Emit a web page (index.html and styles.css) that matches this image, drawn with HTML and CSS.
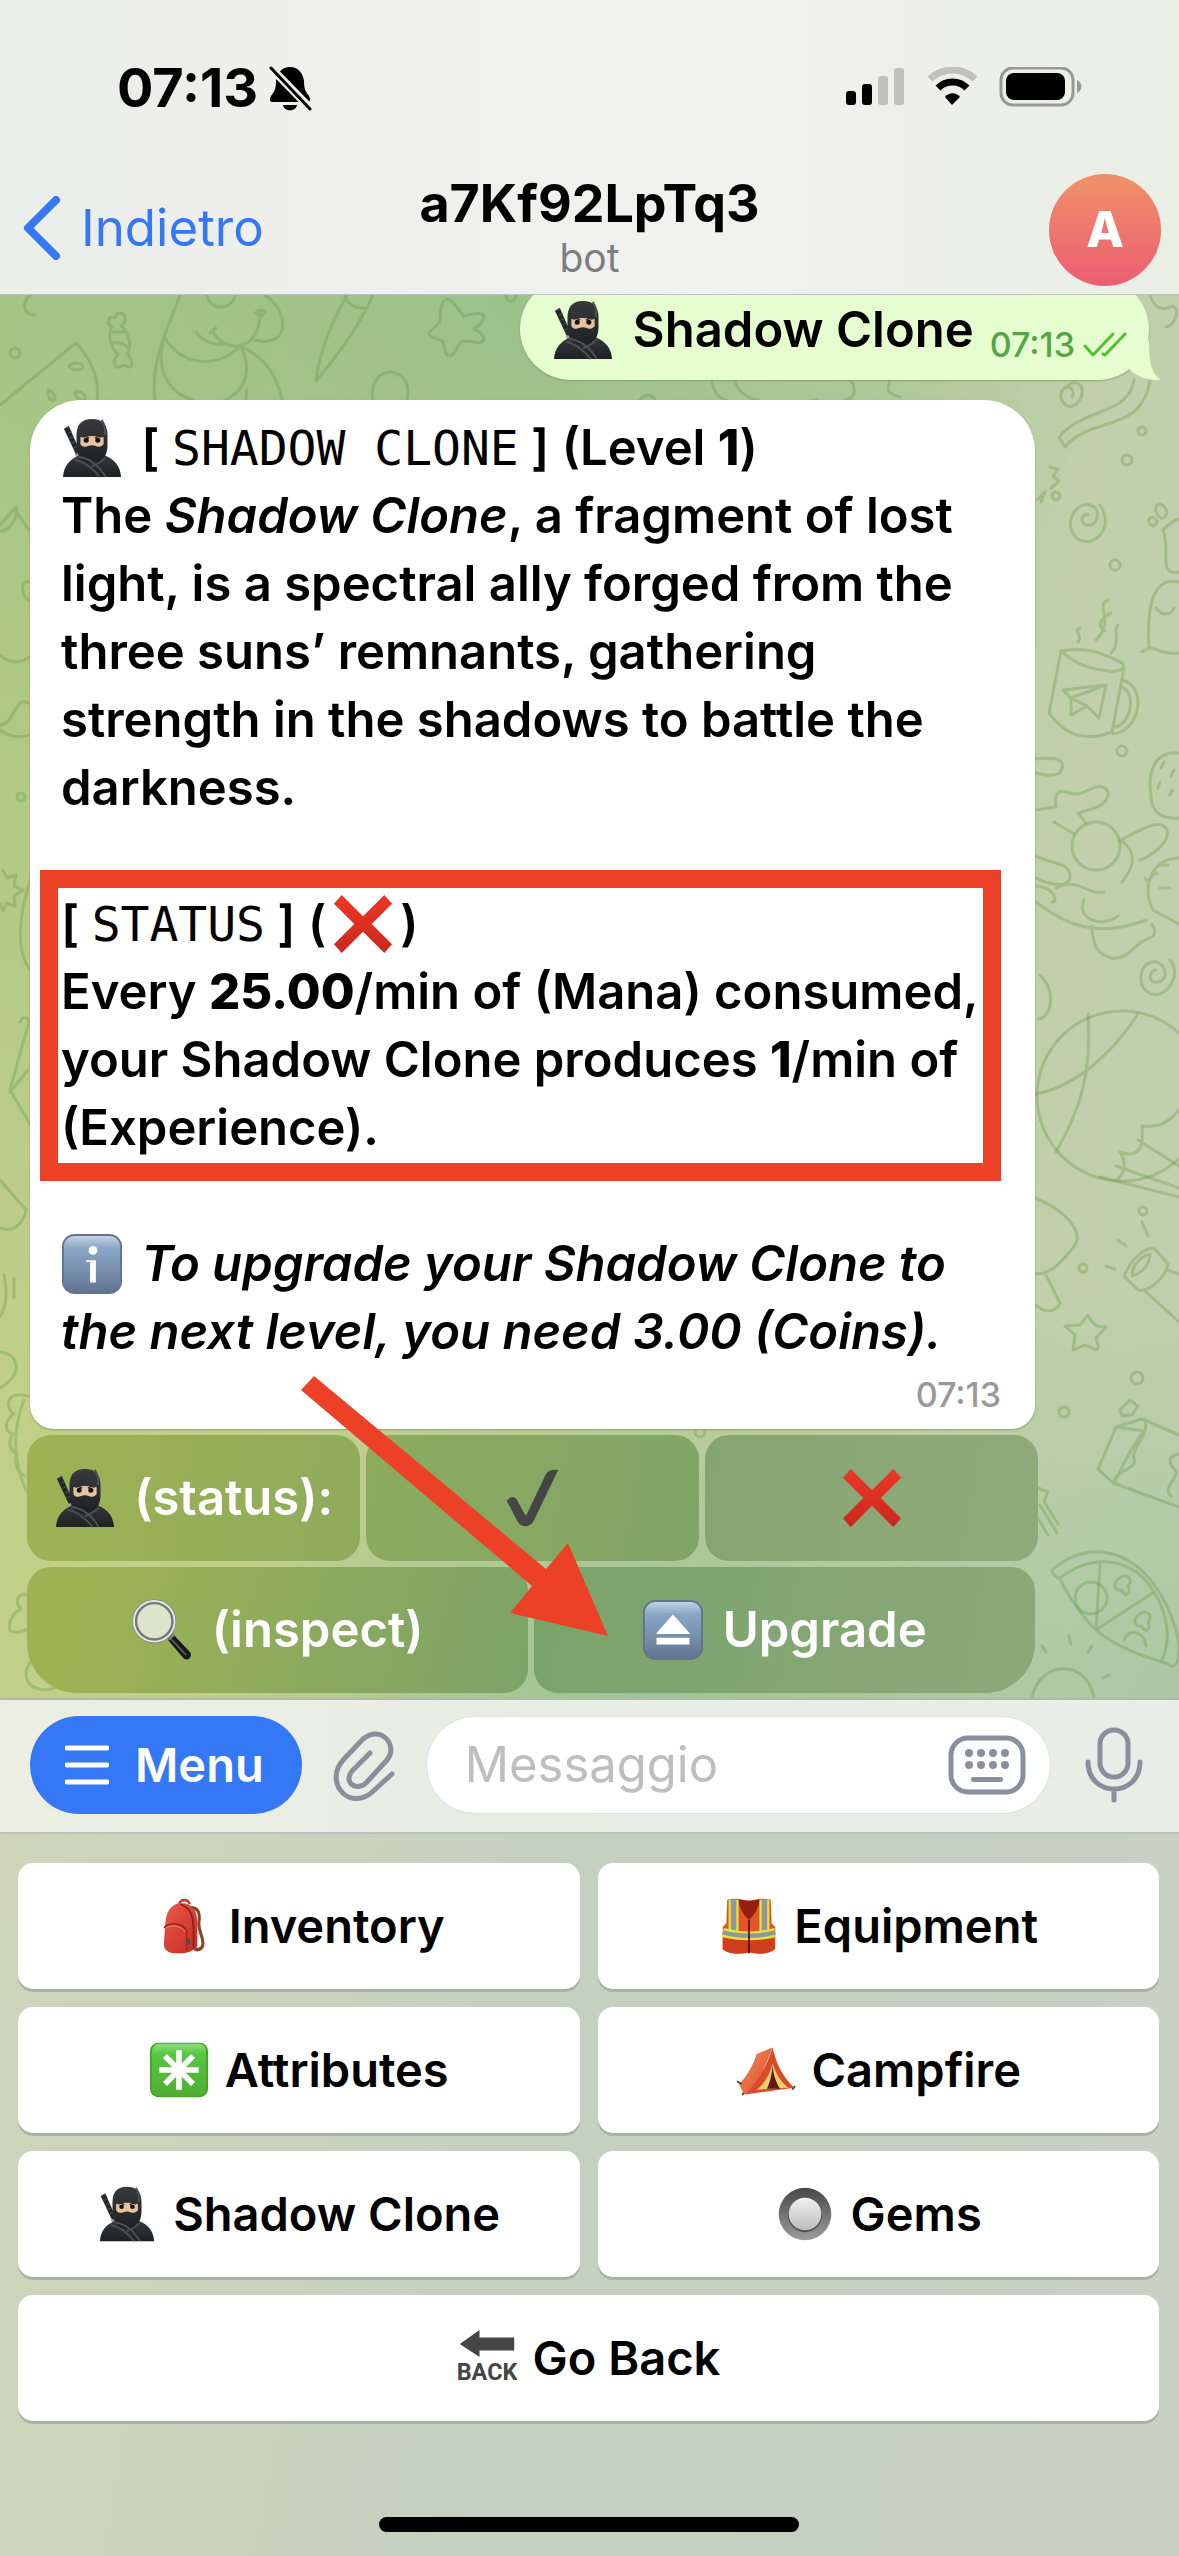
FILE: index.html
```html
<!DOCTYPE html>
<html lang="it">
<head>
<meta charset="utf-8">
<meta name="viewport" content="width=device-width, initial-scale=1">
<title>a7Kf92LpTq3</title>
<link rel="stylesheet" href="styles.css">
</head>
<body>
<svg class="sprite" width="0" height="0" aria-hidden="true">
  <defs>
    <linearGradient id="g-tile" x1="0" y1="0" x2="0" y2="1"><stop offset="0" stop-color="#c3d3e4"/><stop offset=".22" stop-color="#89a5c6"/><stop offset=".6" stop-color="#7890ae"/><stop offset="1" stop-color="#61738e"/></linearGradient>
    <linearGradient id="g-green" x1="0" y1="0" x2="0" y2="1"><stop offset="0" stop-color="#8fe07c"/><stop offset=".2" stop-color="#5ac543"/><stop offset="1" stop-color="#4eae32"/></linearGradient>
    <linearGradient id="g-red" x1="0" y1="0" x2="0" y2="1"><stop offset="0" stop-color="#ee3626"/><stop offset="1" stop-color="#c9291d"/></linearGradient>
    <linearGradient id="g-ring" x1="0" y1="0" x2="0" y2="1"><stop offset="0" stop-color="#484848"/><stop offset="1" stop-color="#9c9c9c"/></linearGradient>
    <linearGradient id="g-knob" x1="0" y1="0" x2="0" y2="1"><stop offset="0" stop-color="#f2f2f2"/><stop offset="1" stop-color="#bcbcbc"/></linearGradient>
    <linearGradient id="g-tent" x1="0" y1="0" x2="1" y2="1"><stop offset="0" stop-color="#f58a5c"/><stop offset="1" stop-color="#dc4f2c"/></linearGradient>
    <linearGradient id="g-pack" x1="0" y1="0" x2="1" y2="1"><stop offset="0" stop-color="#ee5a4a"/><stop offset="1" stop-color="#c22a22"/></linearGradient>
    <linearGradient id="g-robe" x1="0" y1="0" x2="0" y2="1"><stop offset="0" stop-color="#383a3f"/><stop offset="1" stop-color="#1f2023"/></linearGradient>

    <symbol id="ninja" viewBox="0 0 64 64">
      <path d="M3 12l5-3 13 30-4 3z" fill="#26272b"/>
      <path d="M5 12l3-2M7 17l4-2M9 22l4-2M11 27l4-2M13 32l4-2" stroke="#55575d" stroke-width="1"/>
      <path d="M14 38l7-1 1 5-5 2z" fill="#9a9ca1"/>
      <path d="M2 62c1-12 7-18 16-22l14-3 14 3c9 4 15 10 16 22z" fill="url(#g-robe)"/>
      <path d="M32 2c11 0 16 6 16 17v10c0 12-6 19-16 19s-16-7-16-19V19C16 8 21 2 32 2z" fill="url(#g-robe)"/>
      <path d="M20 21c8-2 16-2 24 0v7c-3 3-6 3-8 2-3-1-5-1-8 0-3 1-6 1-8-2z" fill="#e6c3a0"/>
      <circle cx="26" cy="24" r="2.600" fill="#17130f"/><circle cx="38" cy="24" r="2.600" fill="#17130f"/>
      <path d="M22 21c2-1 5-1 7 1M35 22c2-2 5-2 7-1" stroke="#3b2d22" stroke-width="1.500" fill="none"/>
      <path d="M14 44c10 2 20 10 26 18M18 41c12 2 22 10 28 21M46 42c-4 4-9 7-14 9M42 3c4 6 4 10 3 16" stroke="#4e5056" stroke-width="2" fill="none"/>
    </symbol>
    <symbol id="cross" viewBox="0 0 64 64"><path d="M10 2l22 22L54 2l8 9-21 21 21 21-8 9-22-22-22 22-8-9 21-21L2 11z" fill="url(#g-red)"/></symbol>
    <symbol id="info" viewBox="0 0 64 64">
      <rect x="1" y="1" width="62" height="62" rx="13" fill="#61748f"/><rect x="3" y="3" width="58" height="59" rx="11" fill="url(#g-tile)"/>
      <circle cx="33" cy="18" r="4.500" fill="#fff"/><path d="M26 28h10v23h-6V30h-4z" fill="#fff"/>
    </symbol>
    <symbol id="eject" viewBox="0 0 64 64">
      <rect x="1" y="1" width="62" height="62" rx="13" fill="#61748f"/><rect x="3" y="3" width="58" height="59" rx="11" fill="url(#g-tile)"/>
      <path d="M32 16l17 19v1H15v-1zM15 40h34v7H15z" fill="#fff"/>
    </symbol>
    <symbol id="asterisk" viewBox="0 0 64 60">
      <rect x="1" y="1" width="62" height="58" rx="9" fill="#46a02c"/><rect x="3" y="2" width="58" height="56" rx="8" fill="url(#g-green)"/>
      <path d="M32 9v42M11 30h42M17 15l30 30M47 15L17 45" stroke="#fff" stroke-width="6"/><circle cx="32" cy="30" r="6" fill="#fff"/>
    </symbol>
    <symbol id="check" viewBox="0 0 64 64"><path d="M5 35c4-6 9-5 11 0l7 13c1 2 2 2 3 0L45 8c2-4 6-6 13-5L33 55c-4 8-13 8-17 1z" fill="#454545"/></symbol>
    <symbol id="magnifier" viewBox="0 0 64 64">
      <path d="M38 42l6-5 17 18c3 5-3 10-7 6z" fill="#18181a"/><path d="M42 42l15 16" stroke="#5b5b5f" stroke-width="2"/>
      <path d="M35 37l6-4 4 5-5 5z" fill="#77797d"/>
      <circle cx="24" cy="23" r="20" fill="#dde4cb" stroke="#74787d" stroke-width="5"/><circle cx="24" cy="23" r="21" fill="none" stroke="#e3e6ea" stroke-width="2"/>
    </symbol>
    <symbol id="backpack" viewBox="0 0 64 64">
      <g transform="translate(5 0) scale(.84 1)">
      <path d="M40 12c12-1 15 5 13 16-1 10 7 17 5 26-2 4-7 5-11 3" fill="none" stroke="#8a4326" stroke-width="4"/>
      <path d="M27 8c2-6 12-6 14 0" fill="none" stroke="#d6372c" stroke-width="3"/>
      <path d="M9 28C11 12 20 6 34 7c12 2 17 10 17 22v25c-5 6-16 9-27 8C12 62 7 58 7 52z" fill="url(#g-pack)"/>
      <path d="M29 8c14 4 17 14 17 30v18" fill="none" stroke="#84201a" stroke-width="2"/>
      <path d="M7 34c8-7 26-5 30 4v21" fill="none" stroke="#9b2720" stroke-width="2"/><path d="M40 46l-1 7" stroke="#40515e" stroke-width="3"/>
      <path d="M8 35c8-5 22-4 27 4" fill="none" stroke="#ff897a" stroke-width="1"/>
      </g>
    </symbol>
    <symbol id="vest" viewBox="0 0 64 64">
      <path d="M8 3c8-2 14-1 18 0 4 2 8 2 12 0 4-1 10-2 18 0l1 26 4 4v24c-8 7-20 6-28 4-9 2-22 3-30-4V33l4-4z" fill="#e35429"/>
      <path d="M20 3c8 1 16 1 24 0-2 10-6 17-12 22C26 20 22 13 20 3z" fill="#92200f"/>
      <path d="M3 46v12c8 6 21 5 29 3 8 2 20 3 28-3V46z" fill="#cf3d1d"/>
      <path d="M15 3v37M49 3v37" stroke="#dfe63f" stroke-width="11"/><path d="M15 3v37M49 3v37" stroke="#92979b" stroke-width="6"/>
      <path d="M3 39c18 5 40 5 58 0" fill="none" stroke="#dfe63f" stroke-width="10"/><path d="M3 39c18 5 40 5 58 0" fill="none" stroke="#92979b" stroke-width="5"/>
      <path d="M32 25v37" stroke="#57170c" stroke-width="2"/>
    </symbol>
    <symbol id="tent" viewBox="0 0 64 54">
      <path d="M22 10L39 3 20 50l-11 3-6-11C12 34 18 22 22 10z" fill="url(#g-tent)"/>
      <path d="M39 3c4 18 11 31 23 43l-52 7C24 40 33 22 39 3z" fill="#d94b29"/>
      <path d="M39 20c-3 12-9 22-17 28l34-2c-8-6-13-14-17-26z" fill="#ecd06f"/>
      <path d="M39 22c-1 11-3 19-6 25h14c-4-6-7-14-8-25z" fill="#611910"/>
      <path d="M1 39l5 3M8 51l-1 3M60 48l3-4" stroke="#644030" stroke-width="2"/>
    </symbol>
    <symbol id="gem" viewBox="0 0 64 64"><circle cx="32" cy="32" r="29" fill="url(#g-ring)"/><circle cx="32" cy="33" r="19" fill="#505050"/><circle cx="32" cy="32" r="18" fill="url(#g-knob)"/></symbol>
    <symbol id="back" viewBox="0 0 64 60">
      <path d="M3 15L24 0v8h37v14H24v7z" fill="#454545"/>
      <text x="32" y="53" text-anchor="middle" font-family="Roboto, sans-serif" font-weight="700" font-size="25" fill="#454545">BACK</text>
    </symbol>
  </defs>
</svg>

<header class="top">
  <div class="status">
    <div class="clock">07:13
      <svg viewBox="0 0 44 46" width="44" height="46" aria-hidden="true"><path d="M22 2c8 0 13 6 14 14 0 9 2 11 5 15 2 4 1 6-2 6H5c-3 0-4-2-2-6 3-4 5-6 5-15C9 8 14 2 22 2z"/><path d="M15 40h14c-1 7-13 7-14 0z"/><path d="M3 3l39 40" stroke="#efefed" stroke-width="8"/><path d="M3 3l39 41" stroke="#000" stroke-width="3" stroke-linecap="round"/></svg>
    </div>
    <svg class="radios" viewBox="0 0 236 42" width="236" height="42" aria-hidden="true">
      <rect x="0" y="24" width="10" height="14" rx="3"/><rect x="16" y="17" width="10" height="21" rx="3"/><g fill="#c0c0bf"><rect x="32" y="9" width="10" height="29" rx="3"/><rect x="48" y="1" width="10" height="37" rx="3"/></g>
      <path d="M84 12c13-12 32-12 45 0" fill="none" stroke="#c0c0bf" stroke-width="7"/><path d="M92 21c8-8 21-8 29 0" fill="none" stroke="#000" stroke-width="7"/><path d="M106 38l-7-8c4-5 11-5 15 0z"/>
      <rect x="155" y="1" width="72" height="37" rx="12" fill="none" stroke="#999a97" stroke-width="3"/><rect x="160" y="6" width="59" height="27" rx="8"/><path d="M231 13c6 3 6 10 0 13z" fill="#999a97"/>
    </svg>
  </div>
  <nav class="navbar">
    <a class="backlink" href="#"><svg viewBox="0 0 38 64" width="38" height="64" aria-hidden="true"><path d="M33 4L5 32l28 28" fill="none" stroke="#3478f6" stroke-width="8" stroke-linecap="round" stroke-linejoin="round"/></svg>Indietro</a>
    <div class="peer"><h1>a7Kf92LpTq3</h1><p>bot</p></div>
    <a class="avatar" href="#">A</a>
  </nav>
</header>

<main class="chat">
  <svg class="doodles" viewBox="0 295 1179 1403" preserveAspectRatio="xMidYMin slice" aria-hidden="true">
    <g>
      <path d="M30 295c-9 9-7 20 5 20M0 405l76-62c20 22 23 40 21 57M69 366c5-5 14-3 14 1s-12 4-14-1zM48 390c5 1 9 8 6 10s-7-4-6-10zM75 392c6-2 12 3 10 7s-9 0-10-7z"/>
      <path d="M112 327c-8-6-1-12 3-9 2-8 10-5 10 0 0 5-2 7-4 8 9 8 11 21 6 28 6 6 7 14 1 13-3-3-6-1-9 0-6 2-6-7-1-13-8-6-10-21-6-27zM111 332h15M111 343c6-1 12 0 17 4"/>
      <path d="M180 295l-16 42c-10 26-11 46-9 63M164 337c20 32 56 30 76 9M163 343c-8 34 12 52 30 57M225 400c26-12 25-38 15-54 24 10 37 30 42 54M207 295c2 16 26 16 28 0M265 295c26 18 24 54-11 45M212 331c14 24 48 20 48-18M196 332q10 14 32 12M255 313q6-5 10-1l-4 5zM247 390l-1 10M210 333l6-5"/>
      <path d="M347 295c-17 30-28 60-31 86 22-26 44-56 57-86M345 298q6 11 20 10M373 400c-6-38 42-36 34 0"/>
      <path d="M443 302c6-8 12 4 21 14 10-3 20-4 20 1s-7 9-10 12c6 3 12 8 9 12s-12-1-21 0c-5 5-8 16-13 15s-4-8-6-15c-6-3-14-3-14-7s7-6 11-12c0-6 0-14 3-20z"/>
      <path d="M640 400c4-6 12-6 15 0M712 381c2 12 6 17 16 20M735 381c4 18 30 28 82 19M845 400c10-2 12-10 6-19M890 381c-6 12 4 14 10 16"/>
      <path d="M1034 295c-4 8 4 14 14 12M1150 295c4 12 10 16 20 12s8 18-4 20M1066 388c8-12 23-2 13 13-9 13-22 0-17-10 5-9 14-2 10 6"/>
      <path d="M1134 380c-6 36-50 27-75 57l6 10c26-32 76-12 85-67M1050 467l8 2-5 7 6 5-8 7M1037 500l8-8-4 10"/>
      <path d="M1100 505c16 24-8 44-22 34-16-12-4-38 12-34 14 4 6 24-4 20-8-4-2-13 2-10"/>
      <path d="M1163 530c14-14 16-10 16-10M1179 572c-22 4-8-22-16-42M1157 505c6-4 13 7 8 12s-12-6-8-12zM1150 518c5-2 9 4 5 7s-9-5-5-7z"/>
      <path d="M1105 631c-10-6-2-14 6-18M1108 600c-14 6 8 20-12 40M1118 625c-6 6 4 16-7 28M1080 628c-8 2 4 8-2 14"/>
      <path d="M1061 651q30-6 61 12c6 8-8 10-20 7q-24-3-41-19zM1061 651l-12 62q24 34 63 19l12-64M1122 680c26 6 18 52-9 54M1121 687c16 4 10 38-6 40M1063 690l43-5-7 33-12-12-16 9v-17zM1106 685l-35 13 16 8-16 9"/>
      <path d="M1179 582c-22-5-33 15-30 66l-7 4M1149 648c8 0 18 8 30 5M1156 608c6 8 14 8 18 0M1179 753c-22-3-32 16-28 42 0 20 14 24 28 23M1164 762l-3 6M1174 770l-3 6M1160 782l-2 6M1172 790l-2 5"/>
      <path d="M1036 759c20-2 32 0 24 14-8 4-16 2-24 0M1036 810l20-3c-2-16 4-18 14-14s18-4 26-6 16 4 10 13-20 10-28 13l8 10M1054 822l20 12"/>
      <circle cx="1096" cy="846" r="24"/>
      <path d="M1121 840c16-8 40-24 46-10 4 14-20 28-28 30M1036 856c14 8 34 6 34 20s-22 8-34 2M1036 886c20 2 22 16 16 16M1120 840c20 12 12 30 2 42M1179 858c-28 0-38 30-26 52l26 14M1036 902c30 24 64 36 110 18M1056 888c20-12 32 8 48 4M1084 900c-8 20 18 28 34 16M1092 926c0 20 8 30 20 32 18 2 22-16 38-20 8-4 4-10 2-14M1145 878c6 8 8-10 12-4M1160 865h8M1160 888h10M1040 975c18 18 10 44-2 44"/>
      <path d="M1170 960c12 14-2 38-18 34s-14-30 0-32 18 18 6 20-8-12-2-12"/>
      <circle cx="1122" cy="1096" r="85"/><path d="M1036 1094c40-8 76-40 102-80M1088 1014c4 60-8 96-32 138M1116 1180c10-6 10-20 4-28 18 6 24-2 22-26 14 2 26-2 37-16M1116 1166l63 22M1138 1140l41 26M1100 1177l79 20"/>
      <path d="M1035 1198c34 14 50 36 38 50-10 12-26 32-42 24M1046 1275l14 28c-4 10-16 10-24 2"/>
      <path d="M1124 1276c8-18 20-28 30-28l14 16c-4 16-20 28-30 26zM1132 1276c0-12 10-20 18-22 0 12-10 20-18 22zM1168 1270l11 4M1144 1290l35 32M1142 1222l6 14M1118 1240l8 6M1106 1266l9 3"/>
      <path d="M1088 1315q5 13 18 12l-10 11q5 14-2 11l-9-4-12 5 2-15-10-9 15-1z"/>
      <path d="M1098 1469l18-42 26-8 37 16M1098 1469l15 14 66 24M1116 1427l28 4c-16 20-20 34-30 52M1144 1419c8 14-14 30-10 40s-20 12-20 24M1120 1410l10-10 8 6-6 9-10 1zM1179 1454c-12 2-10 10-4 16s-14 18-4 26"/>
      <path d="M1038 1488l10 4-4 10 14 22M1040 1505l17 28M1036 1515l12 20"/>
      <path d="M1052 1570c40-36 100-20 124 60 6 24 2 42-8 34-26-8-54-18-72-34-14-14-30-36-36-52-4 0-8-4-8-8zM1060 1578c34-26 74-20 94 14 16 26 16 50 8 68M1100 1564l-4 66 58-38"/>
      <circle cx="1091" cy="1598" r="16"/><path d="M1120 1578c6-6 14 2 8 8 4 8-4 12-6 4-8 2-10-8-2-12zM1140 1614c6-6 14 2 8 8 4 8-4 12-6 4-8 2-10-8-2-12zM1124 1640c4-12 20-10 22 6"/>
      <path d="M1032 1698c6-36 54-42 62 0M1069 1636l2 8M1092 1646l-4 6M1042 1646l4 6M1103 1678l6-3"/>
      <path d="M14 509l16 22M0 525l16-18c2 14-8 24-16 24M30 582c-10-4-10 16 0 18M0 655c12 10 20 8 30 2M0 725c14-1 16-30 28-22M0 730q14 10 29 5"/>
      <path d="M3 870l4 8 9-3-2 11 9 4-9 6 1 10-8-3-4 8-3-8M30 880c-12 40-14 70 0 90M28 1025L10 1090l20 34M10 1092l18-22M20 1022c2-6 8-6 9 0M0 1180l26 30c-4 18-16 22-26 18M4 1275c4 18 2 32-4 42M14 1278v20M0 1352c20 2 20 22 8 30-4 4-8 6-8 6"/>
      <path d="M28 1396c-24-6-22 14-14 18-10 6-10 18-1 20-6 8-2 18 4 20-4 8 0 18 8 22M24 1400c-12 30-12 70 8 100M30 1595c-16-4-14 10-9 14-10 4-14 18-10 22 8 4 18-2 24-6M32 1660c-10 12-8 28 12 30 10 0 14-4 14-10"/>
    </g>
    <g><circle cx="15" cy="353" r="5"/><circle cx="511" cy="296" r="5"/><circle cx="21" cy="797" r="4"/><circle cx="1142" cy="431" r="4"/><circle cx="1127" cy="460" r="5"/><circle cx="1056" cy="496" r="4"/><circle cx="1115" cy="565" r="5"/><circle cx="1122" cy="751" r="5"/><circle cx="1143" cy="1211" r="4"/><circle cx="1083" cy="1268" r="4"/><circle cx="1137" cy="1378" r="6"/><circle cx="1064" cy="1412" r="5"/><circle cx="700" cy="1432" r="5"/></g>
  </svg>

  <div class="bubble bubble-out">
    <p><svg class="emoji"><use href="#ninja"/></svg> Shadow Clone</p>
    <span class="meta">07:13 <svg viewBox="0 0 44 26" width="44" height="26" aria-hidden="true"><path d="M2 14l8 9L30 2M20 22l2 1L42 2" fill="none" stroke="#4fc02f" stroke-width="3" stroke-linecap="round" stroke-linejoin="round"/></svg></span>
    <svg class="tail" viewBox="0 0 36 40" width="36" height="40" aria-hidden="true"><path d="M24 0c0 22 2 33 12 40-12 1-22-3-30-9L0 20z" fill="#e6fecf"/></svg>
  </div>

  <div class="thread">
    <article class="bubble bubble-in">
      <p><svg class="emoji"><use href="#ninja"/></svg> [ <code>SHADOW CLONE</code> ] (Level <b>1</b>)<br>The <i>Shadow Clone</i>, a fragment of lost light, is a spectral ally forged from the three suns’ remnants, gathering strength in the shadows to battle the darkness.</p>
      <p class="marked">[ <code>STATUS</code> ] (<svg class="emoji inline"><use href="#cross"/></svg>)<br>Every <b>25.00</b>/min of (Mana) consumed, your Shadow Clone produces <b>1</b>/min of (Experience).</p>
      <p><svg class="emoji"><use href="#info"/></svg> <i>To upgrade your Shadow Clone to the next level, you need 3.00 (Coins).</i></p>
      <time class="stamp">07:13</time>
    </article>

    <div class="keys">
      <div class="keyrow">
        <button class="key k1"><svg class="emoji"><use href="#ninja"/></svg> (status):</button>
        <button class="key k2" aria-label="on"><svg class="emoji tight"><use href="#check"/></svg></button>
        <button class="key k3" aria-label="off"><svg class="emoji tight"><use href="#cross"/></svg></button>
      </div>
      <div class="keyrow">
        <button class="key k4"><svg class="emoji"><use href="#magnifier"/></svg> (inspect)</button>
        <button class="key k5"><svg class="emoji"><use href="#eject"/></svg> Upgrade</button>
      </div>
      <svg class="arrow" viewBox="0 0 310 264" width="310" height="264" aria-hidden="true"><path d="M13 1L245 194l22-26 40 93-98-23 22-27L0 15z" fill="#ec4126"/></svg>
    </div>
  </div>
</main>

<form class="composer">
  <button type="button" class="menu"><svg viewBox="0 0 44 42" width="44" height="42" aria-hidden="true"><path d="M2 4h40M2 21h40M2 38h40" stroke="#fff" stroke-width="5" stroke-linecap="round"/></svg>Menu</button>
  <button type="button" class="tool" aria-label="Allega"><svg viewBox="0 0 64 74" width="64" height="74" fill="none" stroke="#8a8f9c" stroke-width="5" stroke-linecap="round" stroke-linejoin="round" aria-hidden="true"><path d="M38 25L20 43c-9 11 4 21 14 12l21-23c12-14-6-36-24-21L12 31C-8 52 14 82 38 66l22-20"/></svg></button>
  <div class="field">
    <input type="text" placeholder="Messaggio" aria-label="Messaggio">
    <button type="button" class="tool" aria-label="Tastiera"><svg viewBox="0 0 78 60" width="78" height="60" aria-hidden="true"><rect x="3" y="3" width="72" height="54" rx="17" fill="none" stroke="#8a8f9c" stroke-width="5"/><g fill="#8a8f9c"><circle cx="21" cy="18" r="4"/><circle cx="33" cy="18" r="4"/><circle cx="45" cy="18" r="4"/><circle cx="57" cy="18" r="4"/><circle cx="21" cy="30" r="4"/><circle cx="33" cy="30" r="4"/><circle cx="45" cy="30" r="4"/><circle cx="57" cy="30" r="4"/><rect x="23" y="42" width="32" height="5" rx="2"/></g></svg></button>
  </div>
  <button type="button" class="tool mic" aria-label="Messaggio vocale"><svg viewBox="0 0 58 76" width="58" height="76" fill="none" stroke="#8a8f9c" stroke-width="5" stroke-linecap="round" aria-hidden="true"><rect x="15" y="3" width="28" height="47" rx="14"/><path d="M3 35c0 36 52 36 52 0M29 62v11"/></svg></button>
</form>

<section class="panel">
  <div class="grid">
    <button><svg class="emoji"><use href="#backpack"/></svg> Inventory</button>
    <button><svg class="emoji"><use href="#vest"/></svg> Equipment</button>
    <button><svg class="emoji"><use href="#asterisk"/></svg> Attributes</button>
    <button><svg class="emoji"><use href="#tent"/></svg> Campfire</button>
    <button><svg class="emoji"><use href="#ninja"/></svg> Shadow Clone</button>
    <button><svg class="emoji"><use href="#gem"/></svg> Gems</button>
    <button class="wide"><svg class="emoji"><use href="#back"/></svg> Go Back</button>
  </div>
  <div class="home"></div>
</section>
</body>
</html>
```
FILE: styles.css
```css
* { box-sizing: border-box; }

body {
  margin: 0;
  min-height: 100vh;
  display: flex;
  flex-direction: column;
  font-family: Inter, "Liberation Sans", sans-serif;
  font-size: 49px;
  font-weight: 600;
  line-height: 68px;
  color: #000;
}

h1, p { margin: 0; }
button, input { font: inherit; color: inherit; border: 0; padding: 0; background: none; }
a { color: inherit; text-decoration: none; }
.sprite { position: absolute; }

.emoji {
  width: 62px;
  height: 62px;
  margin-right: 6px;
  vertical-align: -14px;
}
.emoji.tight { margin: 0; }
.emoji.inline { margin: 0 6px; }

/* header */
.top {
  border-bottom: 1px solid #bfbfc4;
  background: linear-gradient(90deg, #ebeeea, #eeeeed 20%, #f1f1f0 60%, #eceee8 90%, #eaeee3);
}
.status {
  display: flex;
  justify-content: space-between;
  align-items: center;
  padding: 54px 97px 0 117px;
}
.clock {
  display: flex;
  align-items: center;
  gap: 10px;
  font-size: 54px;
  font-weight: 700;
}
.navbar {
  display: grid;
  grid-template-columns: 1fr auto 1fr;
  align-items: center;
  padding: 48px 18px 8px;
}
.backlink {
  display: flex;
  align-items: center;
  gap: 20px;
  padding-left: 5px;
  color: #3478f6;
  font-size: 51px;
  font-weight: 400;
}
.peer {
  align-self: start;
  text-align: center;
}
.peer h1 {
  font-size: 52px;
  font-weight: 700;
  line-height: 68px;
}
.peer p {
  font-size: 39px;
  font-weight: 400;
  line-height: 40px;
  color: #7d7d7d;
}
.avatar {
  justify-self: end;
  width: 112px;
  height: 112px;
  margin-top: 4px;
  border-radius: 50%;
  background: linear-gradient(#f0916a, #ec5d72);
  color: #fff;
  font-weight: 800;
  line-height: 112px;
  text-align: center;
}

/* chat */
.chat {
  position: relative;
  overflow: hidden;
  padding-bottom: 5px;
  background:
    radial-gradient(ellipse 50% 40% at 44% 0, #9cc18a, transparent),
    radial-gradient(ellipse 38% 26% at 54% 100%, #9dc394, transparent),
    radial-gradient(ellipse 40% 30% at 100% 100%, #aac8a4, transparent),
    linear-gradient(90deg, transparent 20%, #c1d0ac 95%),
    linear-gradient(#a6c584, #b5ca88 45%, #c2cf89 80%);
}
.doodles {
  position: absolute;
  inset: 0;
  width: 100%;
  height: 100%;
  fill: none;
  stroke: #5f9440;
  stroke-opacity: 0.32;
  stroke-width: 3;
  stroke-linecap: round;
  stroke-linejoin: round;
}
.bubble {
  position: relative;
  border-radius: 51px;
  box-shadow: 0 1px 2px #6b8a5199;
}
.bubble-out {
  display: flex;
  gap: 16px;
  width: fit-content;
  margin: -17px 30px 20px auto;
  padding: 18px 22px 16px 32px;
  background: #e6fecf;
}
.meta {
  align-self: flex-end;
  display: flex;
  align-items: center;
  gap: 8px;
  font-size: 34px;
  font-weight: 500;
  line-height: 38px;
  color: #54a548;
}
.tail {
  position: absolute;
  right: -12px;
  bottom: 0;
}
.thread { padding: 0 144px 0 30px; position: relative; }
.bubble-in {
  border-radius: 51px 51px 24px 24px;
  padding: 14px 30px 15px 31px;
  background: #fff;
}
.bubble-in p + p { margin-top: 68px; }
code { font-family: "DejaVu Sans Mono", monospace; font-weight: 400; font-size: 48px; line-height: 1; }
b { font-weight: 800; }
.marked { position: relative; }
.marked::before {
  content: "";
  position: absolute;
  inset: -20px 4px -19px -21px;
  border: 18px solid #ec4126;
}
.stamp {
  display: block;
  margin-top: 10px;
  padding-right: 4px;
  text-align: right;
  font-size: 34px;
  font-weight: 500;
  line-height: 38px;
  color: #999;
}

.keys {
  position: relative;
  display: grid;
  gap: 6px;
  margin: 6px -3px 0;
}
.keyrow { display: flex; gap: 6px; }
.key {
  flex: 1 1 0;
  height: 126px;
  border-radius: 24px;
  color: #fff;
  white-space: nowrap;
}
.k1 { background: linear-gradient(100deg, #9eb253, #8fab5c); }
.k2 { background: linear-gradient(100deg, #8cab5e, #80a568); }
.k3 { background: linear-gradient(100deg, #84a570, #91aa7b); }
.k4 { background: linear-gradient(105deg, #9eb253 10%, #7ca368); border-bottom-left-radius: 50px; }
.k5 { background: linear-gradient(100deg, #7aa36b, #8ba879); border-bottom-right-radius: 50px; margin-right: 3px; }
.arrow {
  position: absolute;
  left: 274px;
  top: -60px;
}

/* message bar */
.composer {
  display: flex;
  align-items: center;
  gap: 30px;
  padding: 16px 36px 18px 30px;
  border-top: 2px solid #b2b8ae;
  border-bottom: 2px solid #bcc3ba;
  background: linear-gradient(90deg, #eceee2, #e8ede4 40%, #e8ede7);
}
.menu {
  display: flex;
  align-items: center;
  gap: 26px;
  height: 98px;
  padding: 0 38px 0 35px;
  border-radius: 49px;
  background: #3478f6;
  color: #fff;
  font-size: 47px;
}
.tool { display: flex; }
.mic { margin-left: 4px; }
.field {
  flex: 1;
  min-width: 0;
  display: flex;
  align-items: center;
  height: 98px;
  padding: 0 24px 0 38px;
  border: 1px solid #dde0db;
  border-radius: 49px;
  background: #fff;
}
.field input { flex: 1; min-width: 0; outline: 0; font-size: 49px; font-weight: 400; }
.field input::placeholder { color: #bebec0; opacity: 1; }

/* reply keyboard */
.panel {
  flex: 1;
  display: flex;
  flex-direction: column;
  justify-content: space-between;
  padding: 29px 20px 24px 18px;
  background: linear-gradient(100deg, #d0d5b9, #c4d1c0 45%, #c4d0c1 75%, #cad1c4);
}
.grid {
  display: grid;
  grid-template-columns: 1fr 1fr;
  gap: 18px;
}
.grid button {
  height: 126px;
  border-radius: 15px;
  background: #fff;
  box-shadow: 0 3px 0 #a8b1a2;
  font-size: 47px;
}
.grid .emoji {
  width: 60px;
  height: 58px;
  margin-right: 4px;
  vertical-align: -12px;
}
.grid .wide { grid-column: 1 / -1; }
.home {
  align-self: center;
  width: 420px;
  height: 15px;
  border-radius: 8px;
  background: #000;
}
```
